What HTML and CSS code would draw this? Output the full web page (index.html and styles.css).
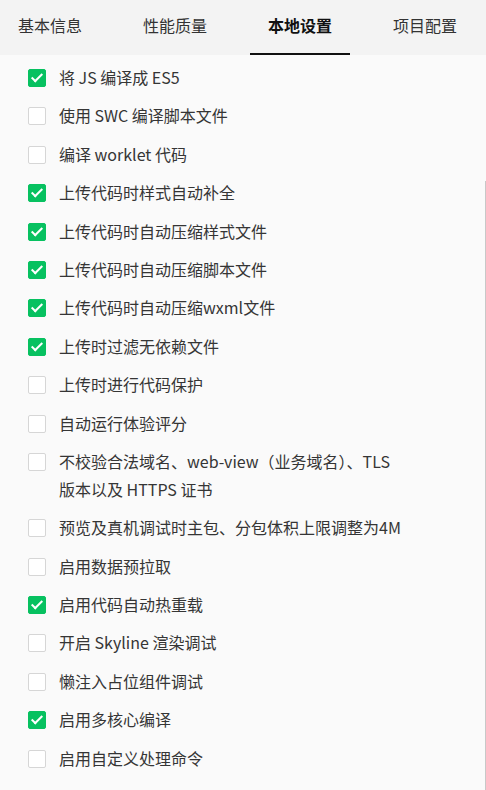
FILE: index.html
```html
<!DOCTYPE html>
<html>

	<head>
		<meta charset="UTF-8">
		<title>本地设置</title>
		<link rel="stylesheet" href="styles.css">
	</head>

	<body>
		<nav class="tabs">
			<span class="tab">基本信息</span>
			<span class="tab">性能质量</span>
			<span class="tab active">本地设置</span>
			<span class="tab">项目配置</span>
		</nav>
		<section class="list">
			<label class="row"><i class="box on"></i><span>将 JS 编译成 ES5</span></label>
			<label class="row"><i class="box"></i><span>使用 SWC 编译脚本文件</span></label>
			<label class="row"><i class="box"></i><span>编译 worklet 代码</span></label>
			<label class="row"><i class="box on"></i><span>上传代码时样式自动补全</span></label>
			<label class="row"><i class="box on"></i><span>上传代码时自动压缩样式文件</span></label>
			<label class="row"><i class="box on"></i><span>上传代码时自动压缩脚本文件</span></label>
			<label class="row"><i class="box on"></i><span>上传代码时自动压缩wxml文件</span></label>
			<label class="row"><i class="box on"></i><span>上传时过滤无依赖文件</span></label>
			<label class="row"><i class="box"></i><span>上传时进行代码保护</span></label>
			<label class="row"><i class="box"></i><span>自动运行体验评分</span></label>
			<label class="row"><i class="box"></i><span>不校验合法域名、web-view（业务域名）、TLS<br>版本以及 HTTPS 证书</span></label>
			<label class="row"><i class="box"></i><span>预览及真机调试时主包、分包体积上限调整为4M</span></label>
			<label class="row"><i class="box"></i><span>启用数据预拉取</span></label>
			<label class="row"><i class="box on"></i><span>启用代码自动热重载</span></label>
			<label class="row"><i class="box"></i><span>开启 Skyline 渲染调试</span></label>
			<label class="row"><i class="box"></i><span>懒注入占位组件调试</span></label>
			<label class="row"><i class="box on"></i><span>启用多核心编译</span></label>
			<label class="row"><i class="box"></i><span>启用自定义处理命令</span></label>
		</section>
		<div class="scrollbar"></div>
	</body>

</html>
```

FILE: styles.css
```css
body {
	margin: 0;
	background: #fafafa;
	color: #353535;
	font-family: "Noto Sans CJK SC", "Microsoft YaHei", sans-serif;
	font-size: 16px;
	height: 790px;
	overflow: hidden;
	position: relative;
}

.tabs {
	height: 55px;
	background: #f3f3f3;
	display: flex;
	gap: 25px;
}

.tab {
	width: 100px;
	height: 55px;
	box-sizing: border-box;
	text-align: center;
	line-height: 50px;
	color: #333;
	border-bottom: 2px solid transparent;
}

.tab.active {
	font-weight: bold;
	color: #111;
	border-bottom-color: #111;
}

.list {
	padding: 8px 0 0 28px;
	display: flex;
	flex-direction: column;
	gap: 10.4px;
}

.row {
	display: flex;
	align-items: flex-start;
	line-height: 28px;
}

.box {
	flex: none;
	width: 16px;
	height: 16px;
	margin: 6px 13px 0 0;
	border: 1px solid #d6d6d6;
	border-radius: 2px;
	background: #fff;
	position: relative;
}

.box.on {
	background: #07c160;
	border-color: #07c160;
}

.box.on::after {
	content: "";
	position: absolute;
	left: 5px;
	top: 1px;
	width: 4px;
	height: 9px;
	border: solid #fff;
	border-width: 0 2px 2px 0;
	transform: rotate(45deg);
}

/* 右侧滚动条 */
.scrollbar {
	position: absolute;
	right: 0;
	top: 181px;
	bottom: 0;
	width: 1px;
	background: #c8c8c8;
}
```
